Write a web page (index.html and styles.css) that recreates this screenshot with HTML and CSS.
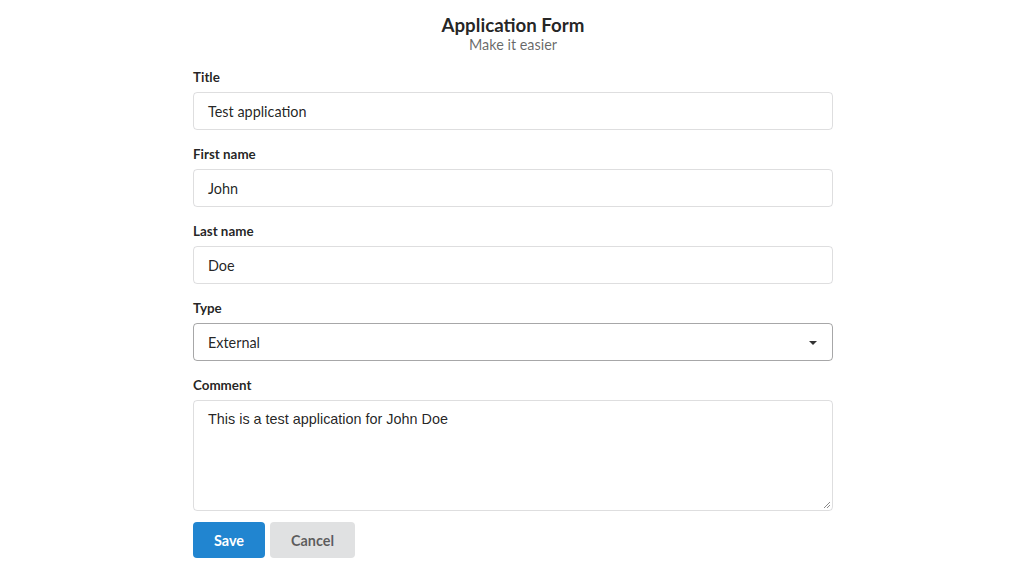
FILE: index.html
```html
<!DOCTYPE html>
<html>
<head>
<meta charset="utf-8">
<link rel="stylesheet" href="styles.css">
</head>
<body>
<div class="page">
  <header class="head">
    <h3 class="title">Application Form</h3>
    <div class="sub">Make it easier</div>
  </header>
  <form class="form">
    <div class="field">
      <label>Title</label>
      <div class="input">Test application</div>
    </div>
    <div class="field">
      <label>First name</label>
      <div class="input">John</div>
    </div>
    <div class="field">
      <label>Last name</label>
      <div class="input">Doe</div>
    </div>
    <div class="field">
      <label>Type</label>
      <div class="input select">External<span class="caret"></span></div>
    </div>
    <div class="field last">
      <label>Comment</label>
      <div class="textarea">This is a test application for John Doe
        <svg class="grip" width="9" height="9" viewBox="0 0 9 9"><path d="M8 2 L2 8 M8 5 L5 8" stroke="#8a8a8a" stroke-width="1" fill="none"/></svg>
      </div>
    </div>
    <div class="buttons">
      <button type="button" class="btn primary">Save</button>
      <button type="button" class="btn">Cancel</button>
    </div>
  </form>
</div>
</body>
</html>
```
FILE: styles.css
```css
* { box-sizing: border-box; }
html, body { margin: 0; padding: 0; background: #fff; }
body { font-family: Lato, "Helvetica Neue", Arial, sans-serif; font-size: 14.4px; color: rgba(0,0,0,0.87); }
.page { width: 641px; padding-right: 1px; margin: 0 auto; padding-top: 14px; }
.head { text-align: center; }
.title { margin: 0; font-size: 18.7px; font-weight: 700; line-height: 23px; color: rgba(0,0,0,0.87); }
.sub { font-size: 14.4px; line-height: 18px; color: rgba(0,0,0,0.6); margin-top: -1px; }
.form { margin-top: 14px; }
.field { margin-bottom: 15px; }
.field.last { margin-bottom: 11px; }
label { display: block; font-size: 13.4px; font-weight: 700; line-height: 19px; margin-bottom: 5px; color: rgba(0,0,0,0.87); }
.input { height: 38px; border: 1px solid rgba(34,36,38,0.15); border-radius: 4px; padding: 1px 14px 0; line-height: 35px; font-size: 14.4px; color: rgba(0,0,0,0.87); position: relative; }
.select { border-color: rgba(34,36,38,0.4); }
.caret { position: absolute; right: 15px; top: 17px; width: 0; height: 0; border-left: 4px solid transparent; border-right: 4px solid transparent; border-top: 4px solid rgba(0,0,0,0.8); }
.textarea { position: relative; height: 111px; border: 1px solid rgba(34,36,38,0.15); border-radius: 4px; padding: 9px 14px; font-family: "Liberation Sans", Arial, sans-serif; font-size: 14.4px; line-height: 18px; color: rgba(0,0,0,0.87); }
.grip { position: absolute; right: 1px; bottom: 1px; }
.buttons { display: flex; gap: 5px; }
.btn { font-family: Lato, sans-serif; font-weight: 700; font-size: 14.4px; height: 36px; border: 0; border-radius: 4px; padding: 0 21px; background: #e0e1e2; color: rgba(0,0,0,0.6); cursor: pointer; }
.btn.primary { background: #2185d0; color: #fff; }
```
